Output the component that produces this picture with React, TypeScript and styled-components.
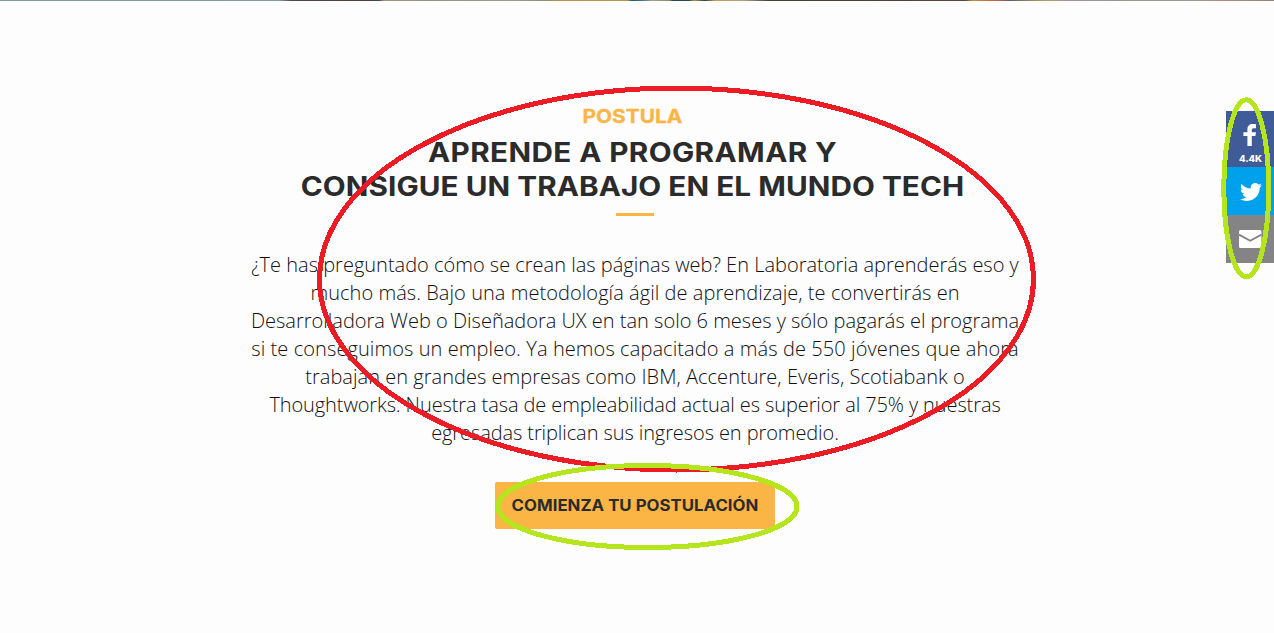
import React from "react";
import styled, { createGlobalStyle } from "styled-components";

const GlobalStyle = createGlobalStyle`
  * { box-sizing: border-box; }
  html, body { margin: 0; background: #fefdfe; overflow: hidden; }
`;

const Page = styled.main`
  position: relative;
  width: 1274px;
  height: 633px;
  overflow: hidden;
  background: #fefdfe;
  color: #2b2b2b;
  font-family: "Open Sans", sans-serif;
`;

const PhotoEdge = styled.div`
  height: 1px;
  background: linear-gradient(
    90deg,
    #81999a 0, #819a9a 280px, #52494a 291px, #513c39 370px, #3d4d5b 379px,
    #a19276 384px, #8e9387 430px, #9b9b93 510px, #8f8f70 545px, #b89248 560px,
    #b8954e 627px, #22596a 632px, #36758a 641px, #a8a07e 652px, #8b8b68 669px,
    #234b49 673px, #234b49 689px, #c29043 694px, #28433f 705px, #c89c51 715px,
    #b59983 745px, #454239 768px, #494039 850px, #60453d 965px, #c18c3c 973px,
    #c06048 998px, #606068 1010px, #bca05a 1045px, #a5929b 1065px,
    #99958f 1120px, #9b9893 1195px, #b18e77 1220px, #9d8177 1274px
  );
`;

const Content = styled.section`
  width: 768px;
  margin: 102px auto 0 250px;
  display: flex;
  flex-direction: column;
  align-items: center;
`;

const Heading = styled.header`
  display: flex;
  flex-direction: column;
  align-items: center;
  margin-right: 3px;
  font-family: Inter, sans-serif;
  font-weight: 700;
  white-space: nowrap;
`;

const Eyebrow = styled.p`
  margin: 0;
  font-size: 19px;
  line-height: 28px;
  transform: scaleX(1.1);
  -webkit-text-stroke: 0.3px currentColor;
  color: #fbb545;
`;

const Title = styled.h1`
  margin: 5px 0 0;
  font-size: 27px;
  line-height: 34px;
  font-weight: 700;
  text-align: center;
  transform: scaleX(1.1);
`;

const Line = styled.span<{ $spacing: number }>`
  display: block;
  white-space: nowrap;
  letter-spacing: ${({ $spacing }) => $spacing}px;
`;

const Rule = styled.div`
  width: 38px;
  height: 3px;
  margin-top: 9px;
  margin-left: 5px;
  background: #fbb545;
`;

const Description = styled.p`
  margin: 35px 0 0 2px;
  width: 769px;
  font-size: 20px;
  line-height: 28px;
  font-weight: 300;
  text-align: center;
  color: #101010;
`;

const ApplyButton = styled.button`
  width: 280px;
  height: 47px;
  margin: 35px 0 0 2px;
  padding: 0;
  border: 0;
  border-radius: 2px;
  background: #fbb545;
  color: #2b2b2b;
  font: 700 15.5px/47px Inter, sans-serif;
  white-space: nowrap;
`;

const ButtonLabel = styled.span`
  display: block;
  transform: scaleX(1.085);
`;

const ShareBar = styled.aside`
  position: absolute;
  top: 111px;
  right: 0;
  width: 48px;
  display: flex;
  flex-direction: column;
`;

const ShareItem = styled.div<{ $color: string; $height: number; $top?: number; $left?: number }>`
  height: ${({ $height }) => $height}px;
  padding-top: ${({ $top = 0 }) => $top}px;
  padding-left: ${({ $left = 1 }) => $left}px;
  display: flex;
  flex-direction: column;
  align-items: center;
  justify-content: center;
  background: ${({ $color }) => $color};
  color: #fff;
`;

const ShareCount = styled.span`
  margin-top: 5px;
  margin-left: 1px;
  font: 800 9.5px/14px Inter, sans-serif;
`;

const Annotations = styled.svg`
  position: absolute;
  inset: 0;
  pointer-events: none;
`;

const lines = [
  { text: "¿Te has preguntado cómo se crean las páginas web? En Laboratoria aprenderás eso y", spacing: 0 },
  { text: "mucho más. Bajo una metodología ágil de aprendizaje, te convertirás en", spacing: 0.055 },
  { text: "Desarrolladora Web o Diseñadora UX en tan solo 6 meses y sólo pagarás el programa", spacing: 0 },
  { text: "si te conseguimos un empleo. Ya hemos capacitado a más de 550 jóvenes que ahora", spacing: 0.09 },
  { text: "trabajan en grandes empresas como IBM, Accenture, Everis, Scotiabank o", spacing: 0.03 },
  { text: "Thoughtworks. Nuestra tasa de empleabilidad actual es superior al 75% y nuestras", spacing: -0.1 },
  { text: "egresadas triplican sus ingresos en promedio.", spacing: -0.09 },
];

const FacebookIcon = () => (
  <svg width="14" height="23" viewBox="0 0 14 23" fill="#fff">
    <path d="M13 0.3v3.9h-2.3c-1.5 0-1.9.7-1.9 1.8v2.2H13l-.6 3.8H8.8V22H4.4V12H.4V8.2h4V5.3C4.4 2 6.4 0 9.6 0 11.2 0 12.5.2 13 .3Z" />
  </svg>
);

const TwitterIcon = () => (
  <svg width="22" height="18" viewBox="0 2.2 24 19.6" fill="#fff">
    <path d="M23.95 4.57a10 10 0 0 1-2.82.77 4.96 4.96 0 0 0 2.16-2.72c-.95.55-2 .95-3.13 1.18a4.92 4.92 0 0 0-8.38 4.48C7.69 8.1 4.07 6.13 1.64 3.16a4.82 4.82 0 0 0-.67 2.48c0 1.7.87 3.2 2.19 4.1a4.9 4.9 0 0 1-2.23-.62v.06a4.92 4.92 0 0 0 3.95 4.83 5 5 0 0 1-2.21.08 4.94 4.94 0 0 0 4.6 3.42A9.87 9.87 0 0 1 0 19.54a13.99 13.99 0 0 0 7.55 2.21c9.05 0 14-7.5 14-13.98 0-.21 0-.42-.02-.63a9.94 9.94 0 0 0 2.42-2.57Z" />
  </svg>
);

const MailIcon = () => (
  <svg width="23" height="18" viewBox="0 0 23 18">
    <rect width="22.4" height="18" rx="1.5" fill="#fff" />
    <path d="M0 4.6 11.2 10.8 22.4 4.6" fill="none" stroke="#848484" strokeWidth="1.8" />
  </svg>
);

export default function App() {
  return (
    <Page>
      <GlobalStyle />
      <PhotoEdge />
      <Content>
        <Heading>
          <Eyebrow>POSTULA</Eyebrow>
          <Title>
            <Line $spacing={0.35}>APRENDE A PROGRAMAR Y</Line>
            <Line $spacing={0.05}>CONSIGUE UN TRABAJO EN EL MUNDO TECH</Line>
          </Title>
          <Rule />
        </Heading>
        <Description>
          {lines.map(({ text, spacing }) => (
            <Line key={text} $spacing={spacing}>{text}</Line>
          ))}
        </Description>
        <ApplyButton><ButtonLabel>COMIENZA TU POSTULACIÓN</ButtonLabel></ApplyButton>
      </Content>
      <ShareBar>
        <ShareItem $color="#3f5b98" $height={56} $top={11} $left={0}><FacebookIcon /><ShareCount>4.4K</ShareCount></ShareItem>
        <ShareItem $color="#00a1ec" $height={48} $top={1}><TwitterIcon /></ShareItem>
        <ShareItem $color="#848484" $height={48}><MailIcon /></ShareItem>
      </ShareBar>
      <Annotations width="1274" height="633" viewBox="0 0 1274 633" fill="none" strokeWidth="5" shapeRendering="crispEdges">
        <ellipse cx="676.5" cy="279" rx="357" ry="191" stroke="#ed1c24" />
        <ellipse cx="647.5" cy="506.5" rx="149.5" ry="41" stroke="#b5e61d" />
        <ellipse cx="1246.3" cy="188.3" rx="22.5" ry="88.5" stroke="#b5e61d" />
      </Annotations>
    </Page>
  );
}
